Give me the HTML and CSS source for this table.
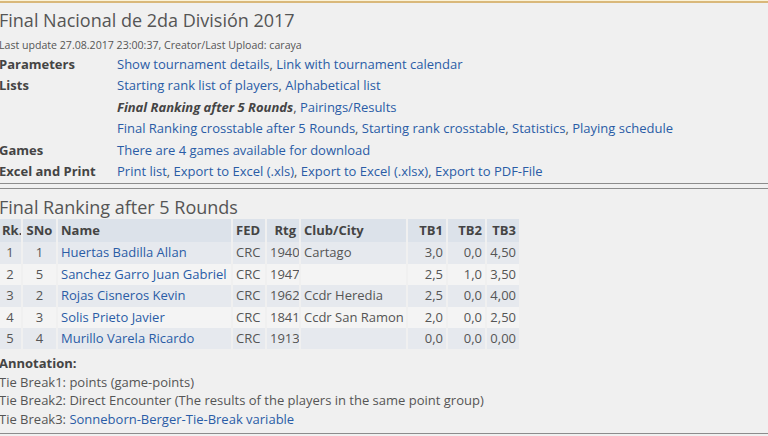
FILE: index.html
```html
<!DOCTYPE html>
<html lang="en">
<head>
  <meta charset="UTF-8" />
  <title>Final Nacional de 2da División 2017</title>
  <link rel="stylesheet" href="styles.css">
</head>
<body>
  <div class="page">
    <div class="section info">
      <h2 class="title">Final Nacional de 2da División 2017</h2>
      <p class="update">Last update 27.08.2017 23:00:37, Creator/Last Upload: caraya</p>
      <table class="menu">
        <tr>
          <th>Parameters</th>
          <td><a href="#">Show tournament details</a>, <a href="#">Link with tournament calendar</a></td>
        </tr>
        <tr>
          <th>Lists</th>
          <td><a href="#">Starting rank list of players</a>, <a href="#">Alphabetical list</a></td>
        </tr>
        <tr>
          <th></th>
          <td><b class="current">Final Ranking after 5 Rounds</b>, <a href="#">Pairings/Results</a></td>
        </tr>
        <tr>
          <th></th>
          <td><a href="#">Final Ranking crosstable after 5 Rounds</a>, <a href="#">Starting rank crosstable</a>, <a href="#">Statistics</a>, <a href="#">Playing schedule</a></td>
        </tr>
        <tr>
          <th>Games</th>
          <td><a href="#">There are 4 games available for download</a></td>
        </tr>
        <tr>
          <th>Excel and Print</th>
          <td><a href="#">Print list</a>, <a href="#">Export to Excel (.xls)</a>, <a href="#">Export to Excel (.xlsx)</a>, <a href="#">Export to PDF-File</a></td>
        </tr>
      </table>
    </div>

    <div class="section ranking">
      <h3 class="subtitle">Final Ranking after 5 Rounds</h3>
      <table class="results">
        <colgroup>
          <col class="w-rk">
          <col class="w-sno">
          <col class="w-name">
          <col class="w-fed">
          <col class="w-rtg">
          <col class="w-club">
          <col class="w-tb1">
          <col class="w-tb2">
          <col class="w-tb3">
        </colgroup>
        <thead>
          <tr>
            <th class="c">Rk.</th>
            <th class="c">SNo</th>
            <th>Name</th>
            <th>FED</th>
            <th class="r">Rtg</th>
            <th>Club/City</th>
            <th class="r">TB1</th>
            <th class="r">TB2</th>
            <th class="r">TB3</th>
          </tr>
        </thead>
        <tbody>
          <tr class="odd">
            <td class="c">1</td><td class="c">1</td><td><a href="#">Huertas Badilla Allan</a></td><td>CRC</td><td class="r">1940</td><td>Cartago</td><td class="r">3,0</td><td class="r">0,0</td><td class="r">4,50</td>
          </tr>
          <tr class="even">
            <td class="c">2</td><td class="c">5</td><td><a href="#">Sanchez Garro Juan Gabriel</a></td><td>CRC</td><td class="r">1947</td><td></td><td class="r">2,5</td><td class="r">1,0</td><td class="r">3,50</td>
          </tr>
          <tr class="odd">
            <td class="c">3</td><td class="c">2</td><td><a href="#">Rojas Cisneros Kevin</a></td><td>CRC</td><td class="r">1962</td><td>Ccdr Heredia</td><td class="r">2,5</td><td class="r">0,0</td><td class="r">4,00</td>
          </tr>
          <tr class="even">
            <td class="c">4</td><td class="c">3</td><td><a href="#">Solis Prieto Javier</a></td><td>CRC</td><td class="r">1841</td><td>Ccdr San Ramon</td><td class="r">2,0</td><td class="r">0,0</td><td class="r">2,50</td>
          </tr>
          <tr class="odd">
            <td class="c">5</td><td class="c">4</td><td><a href="#">Murillo Varela Ricardo</a></td><td>CRC</td><td class="r">1913</td><td></td><td class="r">0,0</td><td class="r">0,0</td><td class="r">0,00</td>
          </tr>
        </tbody>
      </table>

      <div class="notes">
        <b>Annotation:</b>
        <p>Tie Break1: points (game-points)</p>
        <p>Tie Break2: Direct Encounter (The results of the players in the same point group)</p>
        <p>Tie Break3: <a href="#">Sonneborn-Berger-Tie-Break variable</a></p>
      </div>
    </div>
  </div>
</body>
</html>
```

FILE: styles.css
```css
body {
  margin: 0;
  background-color: #f0f0f0;
  color: #555;
  font-family: "Open Sans", "Noto Sans", Arial, sans-serif;
  font-size: 13px;
  overflow: hidden;
}

a {
  color: #2a5ca6;
  text-decoration: none;
}

.page {
  border-top: 1px solid #fbf3d8;
  margin-left: -1px;
}

.section.info {
  border-top: 2px solid #d9b87a;
  border-bottom: 1px solid #8c8c8c;
  padding-bottom: 1px;
}

.title {
  margin: 4px 0 0;
  font-size: 18px;
  font-weight: normal;
  line-height: 26px;
  color: #555;
}

.update {
  margin: 4px 0 0;
  font-size: 10.6px;
  line-height: 17px;
  color: #555;
}

.menu {
  border-collapse: collapse;
}

.menu th,
.menu td {
  padding: 0;
  height: 21.4px;
  line-height: 21.4px;
  white-space: nowrap;
  text-align: left;
}

.menu th {
  width: 118px;
  color: #444;
  font-weight: bold;
}

.current {
  font-style: italic;
  color: #444;
}

.section.ranking {
  margin-top: 4px;
  border-top: 1px solid #8c8c8c;
  border-bottom: 1px solid #8c8c8c;
  padding-bottom: 5px;
}

.subtitle {
  margin: 6px 0 0;
  font-size: 18px;
  font-weight: normal;
  line-height: 24px;
  color: #555;
}

.results {
  border-collapse: collapse;
  table-layout: fixed;
  width: 521px;
}

.w-rk { width: 23px; }
.w-sno { width: 35px; }
.w-name { width: 175px; }
.w-fed { width: 34px; }
.w-rtg { width: 34px; }
.w-club { width: 107px; }
.w-tb1 { width: 40px; }
.w-tb2 { width: 39px; }
.w-tb3 { width: 34px; }

.results th,
.results td {
  padding: 0 3px;
  height: 21.4px;
  line-height: 21.4px;
  white-space: nowrap;
  overflow: hidden;
  text-align: left;
  border-right: 2px solid #f0f0f0;
}

.results th {
  height: 23px;
  background-color: #dce2ea;
  color: #444;
  font-weight: bold;
}

.results .c {
  text-align: center;
}

.results .r {
  text-align: right;
}

.results tr.odd td {
  background-color: #e6e9ee;
}

.results tr.even td {
  background-color: #f4f4f4;
}

.notes {
  margin-top: 5px;
  line-height: 18.5px;
}

.notes b {
  color: #444;
}

.notes p {
  margin: 0;
}
```
